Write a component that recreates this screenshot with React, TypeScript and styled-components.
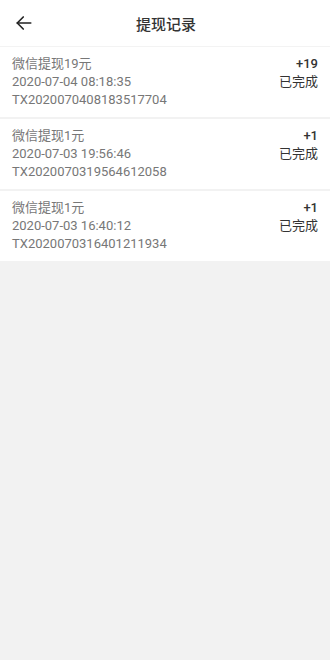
import styled, { createGlobalStyle } from "styled-components"

const GlobalStyle = createGlobalStyle`
	html, body {
		margin: 0;
		padding: 0;
		background: #f2f2f2;
	}
	body {
		font-family: Roboto, "Noto Sans CJK SC", sans-serif;
	}
`

const RECORDS = [
	{
		title: "微信提现19元",
		time: "2020-07-04 08:18:35",
		no: "TX2020070408183517704",
		amount: "+19",
		status: "已完成",
	},
	{
		title: "微信提现1元",
		time: "2020-07-03 19:56:46",
		no: "TX2020070319564612058",
		amount: "+1",
		status: "已完成",
	},
	{
		title: "微信提现1元",
		time: "2020-07-03 16:40:12",
		no: "TX2020070316401211934",
		amount: "+1",
		status: "已完成",
	},
]

const App: React.FC = () => {
	return (
		<>
			<GlobalStyle />
			<Page>
				<Header>
					<BackButton aria-label="back">
						<svg width="18" height="18" viewBox="0 0 24 24" fill="none" stroke="#222" strokeWidth="2.2" strokeLinecap="round" strokeLinejoin="round">
							<path d="M21 12H3" />
							<path d="M11 4l-8 8 8 8" />
						</svg>
					</BackButton>
					<Title>提现记录</Title>
				</Header>

				<List>
					{RECORDS.map((item, index) => (
						<Row key={index}>
							<Info>
								<Line>{item.title}</Line>
								<Line>{item.time}</Line>
								<Line>{item.no}</Line>
							</Info>
							<Side>
								<Amount>{item.amount}</Amount>
								<Status>{item.status}</Status>
							</Side>
						</Row>
					))}
				</List>
			</Page>
		</>
	)
}

export default App

const Page = styled.div`
	min-height: 660px;
	background: #f2f2f2;
`

const Header = styled.header`
	position: relative;
	height: 46px;
	display: flex;
	align-items: center;
	justify-content: center;
	background: #fff;
	border-bottom: 1px solid #f3f3f3;
`

const BackButton = styled.button`
	position: absolute;
	left: 13px;
	top: 50%;
	transform: translateY(-50%);
	display: flex;
	padding: 2px;
	border: none;
	background: none;
`

const Title = styled.h1`
	margin: 0;
	padding-left: 2px;
	font-size: 15px;
	font-weight: 500;
	color: #333;
`

const List = styled.ul`
	margin: 0;
	padding: 0;
	list-style: none;
	display: flex;
	flex-direction: column;
	gap: 2px;
	background: #f2f2f2;
`

const Row = styled.li`
	display: flex;
	justify-content: space-between;
	padding: 8px 12px;
	background: #fff;
`

const Info = styled.div`
	display: flex;
	flex-direction: column;
`

const Line = styled.span`
	font-size: 13px;
	line-height: 18px;
	color: #777;
`

const Side = styled.div`
	display: flex;
	flex-direction: column;
	align-items: flex-end;
`

const Amount = styled.span`
	font-size: 13px;
	line-height: 18px;
	font-weight: 500;
	color: #333;
`

const Status = styled.span`
	font-size: 13px;
	line-height: 18px;
	color: #333;
`
